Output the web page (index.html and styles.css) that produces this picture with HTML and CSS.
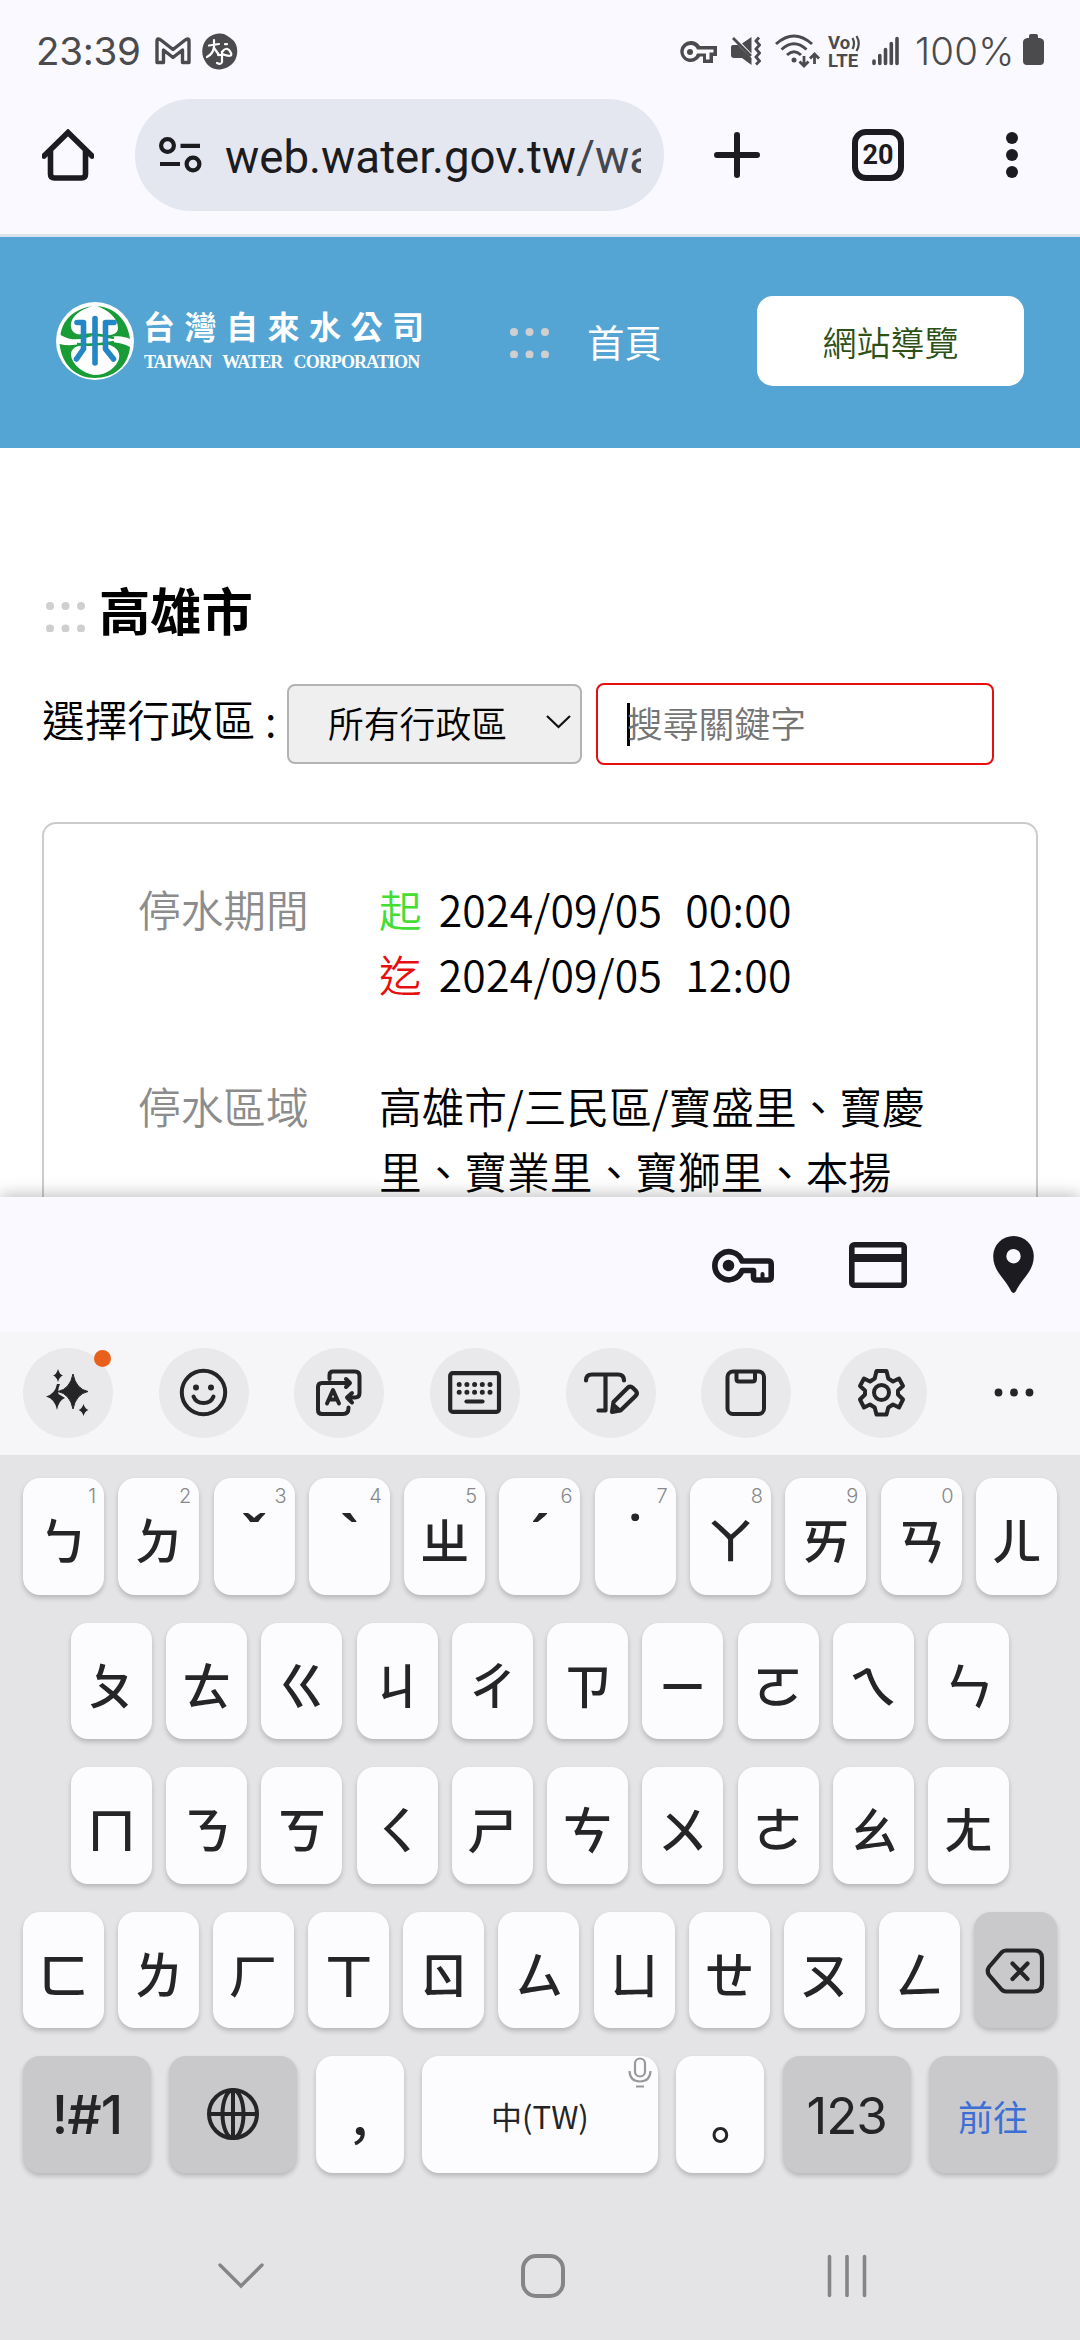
FILE: index.html
```html
<!DOCTYPE html>
<html lang="zh-Hant-TW">
<head>
<meta charset="utf-8">
<title>台灣自來水公司</title>
<link rel="stylesheet" href="styles.css">
</head>
<body>
<div class="screen">
  <header class="chrome">
    <div class="status">
      <span class="clock">23:39</span>
      <svg class="st-mail" width="36" height="28" viewBox="0 0 36 28" fill="none" stroke="#4b4b4d" stroke-width="3.4" stroke-linejoin="round"><path d="M2 25.5V4.500Q2 0 6.500 3.500L18 12.500 29.500 3.500Q34 0 34 4.500V25.500H27.500V13L18 20.500 8.500 13V25.500Z"/></svg>
      <svg class="st-app" width="36" height="37" viewBox="0 0 36 37"><path d="M17 .5C23 0 27 4 31 7 36 12 36 20 34 25 32 31 25 36 18 36.500 11 37 5 33 2 26-1 20 0 12 4 7 8 3 11 1 17 .5Z" fill="#4b4b4d"/><path d="M7 12.500 17 11M12 7V14Q11 21 5 24M12 15 17 22M23 11.200H25M20 19Q25 12 29 20Q31 25 20 21M19 22H16M20 18.500V29Q19 32 15 30" fill="none" stroke="#fff" stroke-width="2.200" stroke-linecap="round"/></svg>
      <svg class="st-key" width="37" height="22" viewBox="0 0 37 22"><path fill="#4b4b4d" fill-rule="evenodd" d="M10.500 0A10.500 10.500 0 0 1 20 5H37V15H33V22H23V15.500H20A10.500 10.500 0 1 1 10.500 0ZM10.500 4A6.800 6.800 0 1 0 17 12.500H26V18.500H29.500V11.500H33.500V8.500H17A6.800 6.800 0 0 0 10.500 4Z"/><circle cx="10" cy="11" r="3" fill="#4b4b4d"/></svg>
      <svg class="st-mute" width="30" height="30" viewBox="0 0 30 30"><path d="M11 7.500 20.500 1V17.500ZM2 9H7L20.500 22V29L11 22H3Q0 22 0 19V11Q0 9 2 9Z" fill="#4b4b4d"/><path d="M2 2 20 20M28 1.500 25 5 28.500 9 25 13 28.500 17 25 21 28.500 25 25 28.500" fill="none" stroke="#4b4b4d" stroke-width="2.800"/></svg>
      <svg class="st-wifi" width="45" height="34" viewBox="0 0 45 34" fill="none" stroke="#4b4b4d" stroke-width="3"><path d="M1 10Q19-6 37 10M6.500 15.500Q19 4 31.500 15.500M12 21Q19 14.500 26 21"/><circle cx="19" cy="26" r="2.500" fill="#4b4b4d" stroke="none"/><path d="M29 22V32M24.500 27.500 29 32 33.500 27.500M39.500 30V20M35 24.500 39.500 20 44 24.500" stroke-width="2.800"/></svg>
      <span class="volte"><b>Vo<svg width="10" height="17" viewBox="0 0 10 17" fill="none" stroke="#4b4b4d" stroke-width="2.200"><path d="M1.500 3Q4.500 8.500 1.500 14M5.500 1Q10 8.500 5.500 16"/></svg></b><b>LTE</b></span>
      <svg class="st-sig" width="27" height="30" viewBox="0 0 27 30" stroke="#4b4b4d" stroke-width="3.600" stroke-linecap="round"><path d="M2 25V27.500M7.800 19.500V27.500M13.500 13.500V27.500M19.300 7.500V27.500M25 2.500V27.500"/></svg>
      <span class="percent">100%</span>
      <svg class="st-bat" width="21" height="31" viewBox="0 0 21 31"><path d="M6 4V2Q6 0 8 0H13Q15 0 15 2V4H17Q21 5 21 8V27Q21 31 17 31H4Q0 31 0 27V8Q0 5 4 4Z" fill="#4b4b4d"/></svg>
    </div>
    <div class="toolbar">
      <svg class="home" width="52" height="52" viewBox="0 0 52 52" fill="none" stroke="#1b1b20" stroke-width="5.600"><path d="M2 27 26 3.500 50 27" stroke-linejoin="miter" stroke-linecap="round"/><path d="M8.500 22V45Q8.500 49 12.500 49H39.500Q43.500 49 43.500 45V22"/></svg>
      <div class="urlbar">
        <svg width="43" height="36" viewBox="0 0 43 36" fill="none" stroke="#1b1b20" stroke-width="4.200"><circle cx="8.500" cy="8.500" r="6.400"/><path d="M21.500 8.800H41M1 27H21"/><circle cx="34" cy="27" r="6.400"/></svg>
        <div class="url">web.water.gov.tw<span>/wa</span></div>
      </div>
      <svg class="plus" width="46" height="46" viewBox="0 0 46 46" stroke="#1b1b20" stroke-width="6" stroke-linecap="round"><path d="M3 23H43M23 3V43"/></svg>
      <div class="tabs">20</div>
      <svg class="more" width="12" height="46" viewBox="0 0 12 46" fill="#1b1b20"><circle cx="6" cy="6" r="6"/><circle cx="6" cy="23" r="6"/><circle cx="6" cy="40" r="6"/></svg>
    </div>
  </header>

  <nav class="site">
    <div class="logo">
      <svg width="78" height="78" viewBox="0 0 78 78"><circle cx="39" cy="39" r="39" fill="#fff"/><path d="M37 4C16 7 6 20 4.500 33 18 41 30 36 38 33.500 34 34.500 20 35 16 28 11 17 24 7 37 4ZM41 4C61 6 72 20 74 37 66 33 55 35 42 34 56 34 62 32 62 26 62 16 52 8 41 4ZM3.500 42C15 45 27 41 37 42 24 43 15 44 15 53 16 63 27 71 38 73 52 73 60 65 63 57 65 49 59 42 43 41 57 39 67 41 74 45 72 65 57 76 39 76 20 76 6 63 3.500 42Z" fill="#199b38"/><path d="M21 34Q39 30 58 36M21 42Q39 44 58 40" fill="none" stroke="#199b38" stroke-width="2.500"/><path d="M39 16.500V61M21 20.500H27.500V47L20.500 57M58 20.500H49.500V47L57.500 57" fill="none" stroke="#2387c6" stroke-width="5.600" stroke-linecap="round" stroke-linejoin="round"/></svg>
      <div class="names"><div class="zh">台灣自來水公司</div><div class="en">TAIWAN&nbsp; WATER&nbsp; CORPORATION</div></div>
    </div>
    <svg class="grip" width="39" height="30" viewBox="0 0 39 30" fill="#cfcfcf"><circle cx="4" cy="4" r="4"/><circle cx="19.500" cy="4" r="4"/><circle cx="35" cy="4" r="4"/><circle cx="4" cy="26.500" r="4"/><circle cx="19.500" cy="26.500" r="4"/><circle cx="35" cy="26.500" r="4"/></svg>
    <a class="home-link">首頁</a>
    <a class="map-link">網站導覽</a>
  </nav>

  <main class="page">
    <div class="title">
      <svg class="grip" width="39" height="30" viewBox="0 0 39 30" fill="#cfcfcf"><circle cx="4" cy="4" r="4"/><circle cx="19.500" cy="4" r="4"/><circle cx="35" cy="4" r="4"/><circle cx="4" cy="26.500" r="4"/><circle cx="19.500" cy="26.500" r="4"/><circle cx="35" cy="26.500" r="4"/></svg>
      <h1>高雄市</h1>
    </div>
    <div class="filters">
      <span class="flabel">選擇行政區 :</span>
      <div class="select">所有行政區<svg width="25" height="14" viewBox="0 0 25 14" fill="none" stroke="#111" stroke-width="2.200"><path d="M1 1 12.500 12 24 1"/></svg></div>
      <div class="search"><i class="caret"></i>搜尋關鍵字</div>
    </div>
    <section class="card">
      <div class="row"><div class="k">停水期間</div><div class="v">
        <div class="when"><span class="from">起</span><span class="date">2024/09/05</span><span class="time">00:00</span></div>
        <div class="when"><span class="to">迄</span><span class="date">2024/09/05</span><span class="time">12:00</span></div>
      </div></div>
      <div class="row"><div class="k">停水區域</div><div class="v">高雄市/三民區/寶盛里、寶慶里、寶業里、寶獅里、本揚</div></div>
    </section>
  </main>

  <div class="fillbar">
    <svg class="f-key" width="62" height="35" viewBox="0 0 62 35" fill="none" stroke="#1b1b20" stroke-width="5.600" stroke-linejoin="round"><path d="M30 13A14 14 0 1 0 30 22.500H41.500V29Q41.500 32 44.500 32H56Q59.200 32 59.200 29V16Q59.200 13 56 13Z"/><circle cx="16.500" cy="17.500" r="5.800" fill="#1b1b20" stroke="none"/><path d="M50.500 31V26" stroke-width="4" stroke-linecap="round"/></svg>
    <svg class="f-card" width="58" height="46" viewBox="0 0 58 46" fill="none" stroke="#1b1b20" stroke-width="5.600"><rect x="2.800" y="2.800" width="52.400" height="40.400" rx="2.500"/><path d="M3 16H55" stroke-width="8"/></svg>
    <svg class="f-pin" width="41" height="57" viewBox="0 0 41 57"><path d="M20.500 0A20.300 20.300 0 0 1 40.800 20C40.800 36 29 42 23 55Q20.500 59 18 55C12 42 .2 36 .2 20A20.300 20.300 0 0 1 20.500 0ZM20.500 13A7.200 7.200 0 1 0 20.500 27.400 7.200 7.200 0 1 0 20.500 13Z" fill="#1b1b20"/></svg>
  </div>

  <div class="kbtools">
    <div class="tool"><svg width="90" height="90" viewBox="0 0 90 90" fill="#252527"><path d="M50 26Q53 41 65 43.500 53 46 50 61 47 46 35 43.500 47 41 50 26Z" stroke="#252527" stroke-width="1"/><path d="M35 21Q36.500 26.500 40 27.500 36.500 28.500 35 34 33.500 28.500 30 27.500 33.500 26.500 35 21ZM34 36 37 36Q34.500 42 35.500 46L42 50Q36 52 34 62 32 51 23 48.500 32 46 34 36ZM60.500 56Q62 61 65.500 62 62 63 60.500 68 59 63 55.500 62 59 61 60.500 56Z"/></svg><i class="badge"></i></div>
    <div class="tool"><svg width="90" height="90" viewBox="0 0 90 90" fill="none" stroke="#252527" stroke-width="4"><circle cx="44.500" cy="44.500" r="21.700"/><path d="M34.500 48.500Q37 55 44.500 55T54.500 48.500" stroke-linecap="round"/><circle cx="37" cy="39.500" r="3" fill="#252527" stroke="none"/><circle cx="52" cy="39.500" r="3" fill="#252527" stroke="none"/></svg></div>
    <div class="tool"><svg width="90" height="90" viewBox="0 0 90 90" fill="none" stroke="#252527" stroke-width="4" stroke-linecap="round" stroke-linejoin="round"><path d="M35.500 31V27Q35.500 23.500 39 23.500H61Q65.500 23.500 65.500 28V45Q65.500 49.500 61 49.500H54M58 45 53 49.500 58 54.500M52 31 56 35 52 39M55 35H28Q24 35 24 39V62Q24 66 28 66H49Q54.500 66 54.500 60V59.500"/><path d="M33 55.500 39 42 45 55.500M35.500 51.500H42.500"/></svg></div>
    <div class="tool"><svg width="90" height="90" viewBox="0 0 90 90" fill="none" stroke="#252527" stroke-width="4.200"><rect x="20.200" y="25.200" width="48.800" height="38.600" rx="2.500"/><path d="M29.200 36.500H60.500M29.200 44.200H60.500" stroke-width="5" stroke-linecap="round" stroke-dasharray="0 7.700"/><path d="M36.500 53.500H52.500" stroke-linecap="round"/></svg></div>
    <div class="tool"><svg width="90" height="90" viewBox="0 0 90 90" fill="none" stroke="#252527" stroke-width="4.200" stroke-linecap="round" stroke-linejoin="round"><path d="M20 32.500Q20 26.500 26 26.500H52Q58 26.500 58 32.500M39.500 27V62.500H32.500"/><path d="M46 64 47.500 54 62 39.500Q64.500 37.500 67 40L70 43Q72 45.500 69.500 48L54.500 62.500ZM48 57.500 53 62" /></svg></div>
    <div class="tool"><svg width="90" height="90" viewBox="0 0 90 90" fill="none" stroke="#252527" stroke-width="4"><rect x="26.500" y="23.500" width="36.500" height="42.500" rx="5.500"/><path d="M35.500 24V31Q35.500 33.500 38 33.500H51.500Q54 33.500 54 31V24" /></svg></div>
    <div class="tool"><svg width="90" height="90" viewBox="0 0 90 90" fill="none" stroke="#252527" stroke-width="4" stroke-linejoin="round"><circle cx="44.500" cy="44.500" r="7.500"/><path d="M39.500 23H49.500L51.300 30.500 56 33.500 62 30.500 66 38 61 42.500V46.500L66 51.500 62 59.500 56 56.500 51.300 59.500 49.500 66.500H39.500L37.700 59.500 33 56.500 27 59.500 23 51.500 28 46.500V42.500L23 38 27 30.500 33 33.500 37.700 30.500Z"/></svg></div>
    <div class="tool plain"><svg width="90" height="90" viewBox="0 0 90 90" fill="#252527"><circle cx="25.500" cy="44.500" r="3.900"/><circle cx="41" cy="44.500" r="3.900"/><circle cx="56.500" cy="44.500" r="3.900"/></svg></div>
  </div>

  <div class="keyboard">
    <div class="keys">
      <div class="key">ㄅ<sup>1</sup></div><div class="key">ㄉ<sup>2</sup></div><div class="key tone">ˇ<sup>3</sup></div><div class="key tone">ˋ<sup>4</sup></div><div class="key">ㄓ<sup>5</sup></div><div class="key tone">ˊ<sup>6</sup></div><div class="key tone">˙<sup>7</sup></div><div class="key">ㄚ<sup>8</sup></div><div class="key">ㄞ<sup>9</sup></div><div class="key">ㄢ<sup>0</sup></div><div class="key">ㄦ</div>
    </div>
    <div class="keys inset">
      <div class="key">ㄆ</div><div class="key">ㄊ</div><div class="key">ㄍ</div><div class="key">ㄐ</div><div class="key">ㄔ</div><div class="key">ㄗ</div><div class="key">ㄧ</div><div class="key">ㄛ</div><div class="key">ㄟ</div><div class="key">ㄣ</div>
    </div>
    <div class="keys inset">
      <div class="key">ㄇ</div><div class="key">ㄋ</div><div class="key">ㄎ</div><div class="key">ㄑ</div><div class="key">ㄕ</div><div class="key">ㄘ</div><div class="key">ㄨ</div><div class="key">ㄜ</div><div class="key">ㄠ</div><div class="key">ㄤ</div>
    </div>
    <div class="keys">
      <div class="key">ㄈ</div><div class="key">ㄌ</div><div class="key">ㄏ</div><div class="key">ㄒ</div><div class="key">ㄖ</div><div class="key">ㄙ</div><div class="key">ㄩ</div><div class="key">ㄝ</div><div class="key">ㄡ</div><div class="key">ㄥ</div>
      <div class="key grey"><svg width="60" height="46" viewBox="0 0 60 46" fill="none" stroke="#252527" stroke-width="4.200" stroke-linecap="round" stroke-linejoin="round"><path d="M21 2.500H49Q57 2.500 57 10V36Q57 43.500 49 43.500H21Q18.500 43.500 16.500 41.500L4 27Q1.500 23 4 19L16.500 4.500Q18.500 2.500 21 2.500ZM27.500 15.500 42.500 31M42.500 15.500 27.500 31"/></svg></div>
    </div>
    <div class="keys bottom">
      <div class="key grey sym">!#1</div>
      <div class="key grey globe"><svg width="54" height="54" viewBox="0 0 54 54" fill="none" stroke="#252527" stroke-width="4"><circle cx="27" cy="27" r="24"/><ellipse cx="27" cy="27" rx="10.500" ry="24"/><path d="M27 3V51M3 27H51"/></svg></div>
      <div class="key punct">，</div>
      <div class="key space">中(TW)<svg class="mic" width="24" height="32" viewBox="0 0 24 32" fill="none" stroke="#98989a" stroke-width="2.200"><rect x="7" y="1.500" width="10" height="18" rx="5"/><path d="M1.500 14Q2 24.500 12 24.500T22.500 14M8 29.500H16"/></svg></div>
      <div class="key punct">。</div>
      <div class="key grey num">123</div>
      <div class="key grey go">前往</div>
    </div>
    <div class="sysnav">
      <svg class="n-down" width="46" height="26" viewBox="0 0 46 26" fill="none" stroke="#858587" stroke-width="3.400" stroke-linecap="round"><path d="M2 2 23 23 44 2"/></svg>
      <svg class="n-home" width="46" height="46" viewBox="0 0 46 46" fill="none" stroke="#858587" stroke-width="4"><rect x="3" y="3" width="40" height="40" rx="13"/></svg>
      <svg class="n-rec" width="40" height="44" viewBox="0 0 40 44" stroke="#858587" stroke-width="3.600" stroke-linecap="round"><path d="M2.500 2.500V41.500M20 2.500V41.500M37.500 2.500V41.500"/></svg>
    </div>
  </div>
</div>
</body>
</html>
```
FILE: styles.css
```css
* { box-sizing: border-box; }
body { margin: 0; background: #fff; font-family: "Noto Sans CJK TC", sans-serif; }
svg { display: block; flex: none; }
.screen { width: 1080px; height: 2340px; overflow: hidden; display: flex; flex-direction: column; background: #fff; }

/* Browser chrome */
.chrome { height: 237px; flex: none; background: #faf9ff; border-bottom: 3px solid #d9e4ee; }
.status { height: 99px; padding-left: 36px; display: flex; align-items: flex-start; font-family: Inter, sans-serif; color: #4b4b4d; font-size: 38.500px; line-height: 46px; }
.clock { width: 119px; margin-top: 28px; letter-spacing: -.3px; white-space: nowrap; }
.st-mail { margin-top: 37px; }
.st-app { margin: 33px 0 0 11px; }
.st-key { margin: 41px 0 0 442px; }
.st-mute { margin: 36px 0 0 14px; }
.st-wifi { margin: 34px 0 0 14px; }
.volte { width: 44px; margin: 35px 0 0 8px; display: flex; flex-direction: column; font-family: Roboto, sans-serif; font-size: 18.500px; line-height: 17.500px; letter-spacing: .2px; }
.volte b { display: flex; align-items: center; font-weight: 700; }
.st-sig { margin: 36px 0 0 0; }
.percent { width: 108px; margin: 28px 0 0 16px; letter-spacing: .2px; font-weight: 300; white-space: nowrap; }
.st-bat { margin-top: 34px; }
.toolbar { display: flex; align-items: center; height: 112px; }
.home { margin-left: 42px; }
.urlbar { width: 529px; height: 112px; margin-left: 41px; padding: 0 23px 0 24px; border-radius: 56px; background: #e4e7f0; display: flex; align-items: center; }
.url { flex: 1; min-width: 0; margin: 6px 0 0 23px; overflow: hidden; white-space: nowrap; font-family: Roboto, sans-serif; font-size: 45.600px; line-height: 60px; color: #1b1b20; }
.url span { color: #44474f; }
.plus { margin-left: 50px; }
.tabs { width: 52px; height: 52px; margin-left: 92px; border: 6px solid #1b1b20; border-radius: 14px; font: 700 27px/40px Roboto, sans-serif; text-align: center; color: #1b1b20; }
.more { margin-left: 102px; }

/* Site header */
.site { height: 211px; flex: none; background: #54a5d4; display: flex; align-items: flex-start; }
.logo { display: flex; margin: 65px 0 0 56px; width: 454px; }
.names { margin-left: 9px; color: #fff; white-space: nowrap; }
.zh { font-size: 32px; font-weight: 700; letter-spacing: 9.500px; line-height: 40px; margin-top: 3px; }
.en { font: 700 18px/20px "Liberation Serif", serif; margin: 7px 0 0 1px; letter-spacing: -.9px; word-spacing: 2px; }
.site .grip { margin-top: 91px; }
.home-link { margin: 76px 0 0 38px; width: 170px; font-size: 37.500px; line-height: 56px; color: #fff; }
.map-link { width: 267px; height: 90px; margin-top: 59px; border-radius: 16px; background: #fff; color: #2d5016; font-size: 34px; line-height: 91px; text-align: center; font-weight: 350; }

/* Page */
.page { height: 749px; flex: none; overflow: hidden; padding: 125px 42px 0; font-size: 42.700px; font-weight: 350; color: #000; }
.title { display: flex; align-items: flex-start; height: 70px; padding-left: 4px; }
.title .grip { margin-top: 29px; }
h1 { margin: 0 0 0 14px; font-size: 51.300px; line-height: 72px; font-weight: 700; }
.filters { display: flex; height: 80px; margin-top: 40px; }
.flabel { width: 245px; line-height: 71px; white-space: nowrap; }
.select { width: 295px; height: 80px; margin-top: 1px; border: 2px solid #b3b3b3; border-radius: 8px; background: #efefef; padding: 0 9px 4px 39px; display: flex; align-items: center; justify-content: space-between; font-size: 35.800px; }
.search { width: 398px; height: 82px; margin-left: 14px; padding: 0 0 4px 29px; border: 2px solid #e60f0f; border-radius: 8px; display: flex; align-items: center; font-size: 35.800px; color: #757575; }
.caret { width: 3px; height: 43px; margin: 5px -3px 0 0; background: #000; }
.card { margin-top: 59px; height: 500px; padding: 52px 0 0 94px; border: 2px solid #ccc; border-radius: 14px; }
.row { display: flex; line-height: 65px; margin-bottom: 67px; }
.k { width: 241px; color: #8c8c8c; }
.v { width: 575px; }
.when { display: flex; height: 65px; }
.from { color: #4d3; }
.to { color: #e60f0f; }
.date { margin-left: 17px; letter-spacing: .25px; }
.time { margin-left: 23px; letter-spacing: .25px; }

/* Autofill bar */
.fillbar { position: relative; height: 135px; flex: none; background: #faf9ff; box-shadow: 0 -2px 16px rgba(0,0,0,.26); display: flex; align-items: flex-start; padding-left: 712px; }
.f-key { margin-top: 51px; }
.f-card { margin: 45px 0 0 75px; }
.f-pin { margin: 39px 0 0 86px; }

/* Keyboard tools */
.kbtools { position: relative; height: 123px; flex: none; background: #f6f6f8; padding: 16px 0 0 23px; display: flex; gap: 45.700px; }
.tool { position: relative; width: 90px; height: 90px; border-radius: 50%; background: #e9e9eb; flex: none; }
.tool.plain { background: none; }
.badge { position: absolute; right: 2px; top: 2px; width: 17px; height: 17px; border-radius: 50%; background: #e8601c; }

/* Keys */
.keyboard { flex: 1; background: #e4e4e6; padding: 23px 23px 0; }
.keys { display: flex; justify-content: space-between; height: 116.500px; margin-bottom: 28px; }
.keys.inset { padding: 0 48px; }
.key { position: relative; width: 81px; height: 116.500px; border-radius: 17px; background: #fcfcfe; box-shadow: 0 3px 5px rgba(0,0,0,.2); text-align: center; font-size: 50px; font-weight: 500; line-height: 120px; color: #252527; }
.key sup { position: absolute; right: 8px; top: 8px; font: 300 20px/20px Inter, sans-serif; color: #88888a; }
.tone { font-family: "Noto Sans", sans-serif; font-size: 56px; font-weight: 600; line-height: 113px; }
.grey { background: #c9c9cb; display: flex; justify-content: center; }
.keys .grey { width: 83px; }
.grey svg { margin-top: 36px; }
.bottom .grey { width: 128px; }
.sym, .num { font-family: Inter, sans-serif; font-size: 51px; line-height: 119px; letter-spacing: -1px; font-weight: 400; }
.sym { font-size: 54px; font-weight: 500; line-height: 117px; }
.globe svg { margin-top: 31px; }
.punct { width: 88px; line-height: 153px; }
.space { width: 236px; font-size: 31px; line-height: 120px; font-weight: 400; }
.mic { position: absolute; right: 6px; top: 1px; }
.go { font-size: 35px; line-height: 119px; font-weight: 400; color: #3c6fd6; }
.sysnav { display: flex; align-items: center; height: 46px; margin-top: 80px; padding-left: 195px; }
.n-home { margin-left: 256px; }
.n-rec { margin-left: 261px; }
```
